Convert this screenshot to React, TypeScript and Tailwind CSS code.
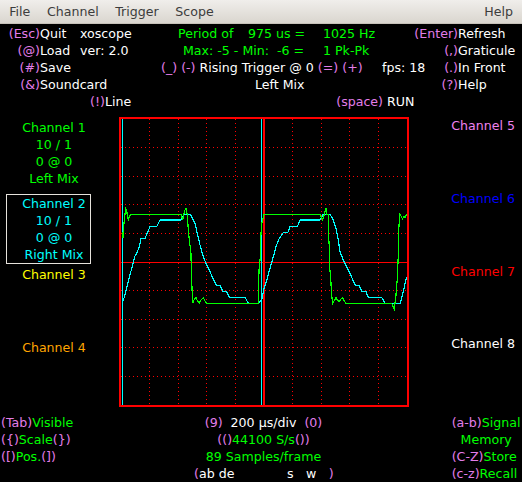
const K = 'text-[#e27de9]';
const G = 'text-[#00ff00]';

// graticule positions (screen coords, the svg viewBox uses the same)
const vx = [149, 178, 206, 235, 292, 321, 349, 378];
const hy = [147, 176, 204, 233, 290, 319, 347, 376];
const steps = (from: number, to: number) => {
  const out: number[] = [];
  for (let i = from; i <= to; i += 4) out.push(i);
  return out;
};
const ys = steps(119, 405);
const xs = steps(121, 406);

const green: number[][] = [
  [123, 238], [123, 233], [124, 223], [125, 214], [125.5, 208], [126.5, 210], [127.5, 216],
  [128.3, 220], [129.3, 217], [130.7, 214.3], [181, 214.3], [181.7, 216.7], [182.7, 220],
  [183.7, 215], [185, 210], [186, 208.3], [186.7, 212], [187.3, 214.3], [188.3, 230],
  [189.3, 240], [191, 253.3], [191.3, 273.3], [192.7, 303.3], [194, 300], [196, 297.7],
  [197.5, 301], [199.3, 303], [201, 300], [203.3, 297.7], [205, 301], [206.7, 303.3],
  [258.3, 303.3], [258.3, 290], [259.3, 265], [260.7, 255], [260.7, 238], [261.7, 223.3],
  [262.7, 220], [264, 214.3], [320, 214.3], [321.7, 218.3], [322.7, 220], [324, 216],
  [325, 212], [326, 208.3], [326.7, 214.3], [328.3, 214.3], [328.3, 231.7], [329.3, 246.7],
  [329.3, 263.3], [330.7, 279], [331.7, 295.7], [332.7, 303.3], [334.5, 300], [336, 297.7],
  [337.5, 300], [339.3, 301.7], [341, 299], [342.7, 297.7], [344.3, 301], [346, 303.3],
  [391.7, 303.3], [392.7, 305.7], [394.3, 309], [396, 295], [397.3, 278.3], [398.3, 255],
  [398.3, 238], [399, 225], [400, 214.3], [401, 216], [402.5, 219], [404, 216], [405, 218],
  [406.7, 214.3],
];

const cyan: number[][] = [
  [122.7, 302], [125, 295], [128.3, 281.7], [131.7, 268.3], [135, 256], [136.7, 253.3],
  [139.3, 246.7], [141, 238.3], [145, 238.3], [150, 226.7], [156.7, 226.7], [160, 220],
  [181, 220], [183, 216], [185, 214.3], [190, 214.3], [191.7, 216.7], [195, 223.3],
  [197.3, 233.3], [200, 245], [203.3, 256.7], [206.7, 265], [210, 271.7], [216, 285],
  [220, 285.7], [222.7, 291], [226.7, 291.7], [229.3, 297.3], [245, 297.3], [248.3, 303.3],
  [258, 303.3], [261.7, 300], [264, 288.3], [267.3, 278.3], [270, 268.3], [273.3, 256.7],
  [276, 246.7], [279.3, 238.3], [283.3, 232.7], [287.7, 232.7], [290, 226.7], [297.3, 226.7],
  [300, 220], [320, 220], [323.3, 214.3], [330, 214.3], [333.3, 220], [336, 228.3],
  [338.3, 240], [340, 251.7], [343.3, 260], [345, 263.3], [347.3, 268.3], [350, 273.3],
  [355, 285], [359.3, 285.7], [361.7, 291], [366, 291.7], [368.3, 297.3], [381.7, 297.3],
  [385, 303.3], [400, 303.3], [401.7, 298.3], [404, 288.3], [406.7, 276.7],
];

const pts = (a: number[][]) => a.map((p) => p.join(',')).join(' ');

const Scope = () => (
  <svg
    width={290}
    height={290}
    viewBox="119 117 290 290"
    className="block shrink-0 mt-[7px]"
    shapeRendering="crispEdges"
  >
    {/* dotted graticule */}
    {vx.map((x) =>
      ys.map((y) => <rect key={`v${x}-${y}`} x={x} y={y} width={1} height={1} fill="#ff0000" />),
    )}
    {hy.map((y) =>
      xs.map((x) => <rect key={`h${y}-${x}`} x={x} y={y} width={1} height={1} fill="#ff0000" />),
    )}
    <rect x={263} y={119} width={1.5} height={287} fill="#ff0000" />
    <rect x={121} y={262} width={286} height={1} fill="#ff0000" />
    <rect x={122} y={119} width={1} height={287} fill="#00ffff" />
    <rect x={261} y={119} width={1} height={287} fill="#00ffff" />
    <polyline points={pts(cyan)} fill="none" stroke="#00ffff" strokeWidth={1.2} />
    <polyline points={pts(green)} fill="none" stroke="#00ff00" strokeWidth={1.2} />
    <rect x={120} y={118} width={288} height={288} fill="none" stroke="#ff0000" strokeWidth={2} />
  </svg>
);

export default function App() {
  return (
    <div className="w-[522px] h-[482px] overflow-hidden bg-black text-white text-[12.6px] leading-[17px] font-['DejaVu_Sans',sans-serif]">
      {/* menu bar */}
      <div className="flex h-[24px] items-center bg-gradient-to-b from-[#f0eeeb] to-[#dad6cf] border-b border-[#c6c1b9] text-[#3c3c3c] pl-[1px]">
        <span className="px-[8.3px]">File</span>
        <span className="px-[8.3px]">Channel</span>
        <span className="px-[8.3px]">Trigger</span>
        <span className="px-[8.3px]">Scope</span>
        <span className="ml-auto px-[9px]">Help</span>
      </div>

      {/* top info */}
      <div className="pt-[1px] whitespace-pre">
        <div className="flex h-[17px]">
          <span className={`w-[40px] shrink-0 text-right ${K}`}>(Esc)</span>
          <span className="w-[40px] shrink-0">Quit</span>
          <span className="w-[98px] shrink-0">xoscope</span>
          <span className={`w-[70px] shrink-0 ${G}`}>Period of</span>
          <span className={`w-[75px] shrink-0 ${G}`}>975 us =</span>
          <span className={`w-[60px] shrink-0 ${G}`}>1025 Hz</span>
          <span className={`w-[75px] shrink-0 text-right ${K}`}>(Enter)</span>
          <span>Refresh</span>
        </div>
        <div className="flex h-[17px]">
          <span className={`w-[40px] shrink-0 text-right ${K}`}>(@)</span>
          <span className="w-[40px] shrink-0">Load</span>
          <span className="w-[103px] shrink-0">ver: 2.0</span>
          <span className={`w-[140px] shrink-0 ${G}`}>Max: -5 - Min:  -6 =</span>
          <span className={`w-[60px] shrink-0 ${G}`}>1 Pk-Pk</span>
          <span className={`w-[75px] shrink-0 text-right ${K}`}>(,)</span>
          <span>Graticule</span>
        </div>
        <div className="flex h-[17px]">
          <span className={`w-[40px] shrink-0 text-right ${K}`}>(#)</span>
          <span className="w-[121px] shrink-0">Save</span>
          <span className="w-[221px] shrink-0">
            <span className={K}>(_) (-)</span> Rising Trigger @ 0 <span className={K}>(=) (+)</span>
          </span>
          <span className="w-[50px] shrink-0">fps: 18</span>
          <span className={`w-[26px] shrink-0 text-right ${K}`}>(.)</span>
          <span>In Front</span>
        </div>
        <div className="flex h-[17px]">
          <span className={`w-[40px] shrink-0 text-right ${K}`}>(&amp;)</span>
          <span className="w-[215px] shrink-0">Soundcard</span>
          <span className="w-[150px] shrink-0">Left Mix</span>
          <span className={`w-[53px] shrink-0 text-right ${K}`}>(?)</span>
          <span>Help</span>
        </div>
        <div className="flex h-[17px]">
          <span className={`w-[105px] shrink-0 text-right ${K}`}>(!)</span>
          <span className="w-[200px] shrink-0">Line</span>
          <span className={`w-[78px] shrink-0 text-right ${K}`}>(space)</span>
          <span> RUN</span>
        </div>
      </div>

      {/* channels + scope */}
      <div className="flex h-[304px]">
        <div className="w-[119px] shrink-0 flex flex-col pt-[9px]">
          <div className={`w-[108px] text-center ${G}`}>
            <div>Channel 1</div>
            <div>10 / 1</div>
            <div>0 @ 0</div>
            <div>Left Mix</div>
          </div>
          <div className="mt-[7px] ml-[6px] w-[85px] border border-[#e6e2dc] pl-[11px] text-center text-[#00ffff]">
            <div className="whitespace-nowrap">Channel 2</div>
            <div>10 / 1</div>
            <div>0 @ 0</div>
            <div className="whitespace-nowrap">Right Mix</div>
          </div>
          <div className="mt-[2px] w-[108px] text-center text-[#ffff00]">Channel 3</div>
          <div className="mt-[56px] w-[108px] text-center text-[#ffa500]">Channel 4</div>
        </div>
        <Scope />
        <div className="flex-1 flex flex-col items-end pr-[7px] pt-[6.5px]">
          <div className="text-[#ee82ee]">Channel 5</div>
          <div className="mt-[56px] text-[#0000ff]">Channel 6</div>
          <div className="mt-[56.5px] text-[#ff0000]">Channel 7</div>
          <div className="mt-[55px] text-white">Channel 8</div>
        </div>
      </div>

      {/* bottom info */}
      <div className="whitespace-pre">
        <div className="flex h-[17px]">
          <span className="w-[150px] shrink-0 pl-[1px]">
            <span className={K}>(Tab)</span>
            <span className={G}>Visible</span>
          </span>
          <span className="w-[227px] shrink-0 text-center">
            <span className={K}>(9)</span>  200 µs/div  <span className={K}>(0)</span>
          </span>
          <span className="pl-[74.7px]">
            <span className={K}>(a-b)</span>
            <span className={G}>Signal</span>
          </span>
        </div>
        <div className="flex h-[17px]">
          <span className="w-[150px] shrink-0 pl-[1px]">
            <span className={K}>({'{'})</span>
            <span className={G}>Scale</span>
            <span className={K}>({'}'})</span>
          </span>
          <span className="w-[227px] shrink-0 text-center">
            <span className={K}>(()</span>
            <span className={G}>44100 S/s</span>
            <span className={K}>())</span>
          </span>
          <span className={`ml-[74.7px] w-[69px] text-center ${G}`}>Memory</span>
        </div>
        <div className="flex h-[17px]">
          <span className="w-[150px] shrink-0 pl-[1px]">
            <span className={K}>([)</span>
            <span className={G}>Pos.</span>
            <span className={K}>(])</span>
          </span>
          <span className={`w-[227px] shrink-0 text-center ${G}`}>89 Samples/frame</span>
          <span className="pl-[74.7px]">
            <span className={K}>(C-Z)</span>
            <span className={G}>Store</span>
          </span>
        </div>
        <div className="flex h-[17px]">
          <span className="w-[194px] shrink-0" />
          <span className="w-[93px] shrink-0">
            <span className={K}>(</span>ab de
          </span>
          <span className="w-[19px] shrink-0">s</span>
          <span className="w-[22.7px] shrink-0">w</span>
          <span className={`w-[71px] shrink-0 ${K}`}>)</span>
          <span className="w-[52px] shrink-0" />
          <span>
            <span className={K}>(c-z)</span>
            <span className={G}>Recall</span>
          </span>
        </div>
      </div>
    </div>
  );
}
